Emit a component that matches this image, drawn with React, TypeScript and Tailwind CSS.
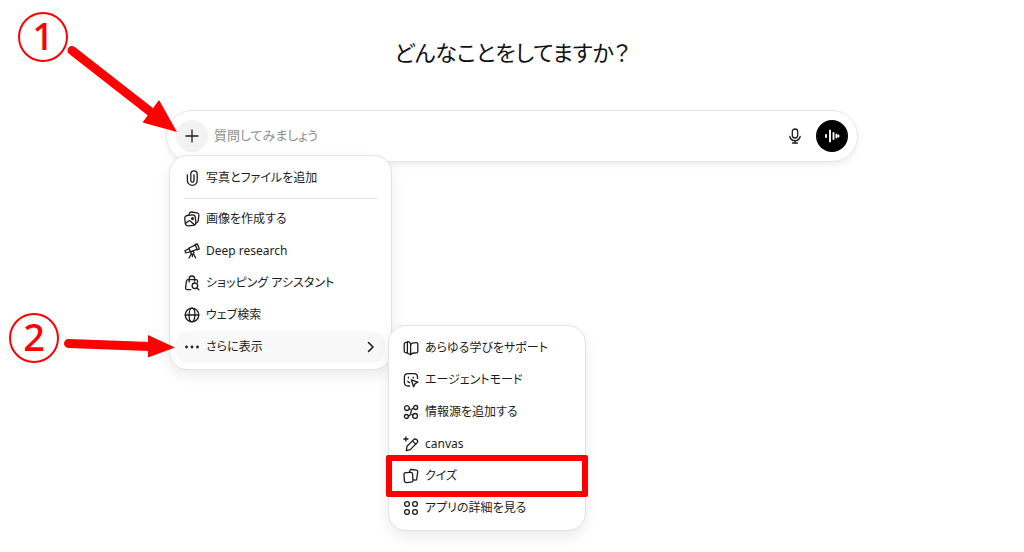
import React, { useState } from 'react';

interface IconProps {
  children: React.ReactNode;
}

interface MenuItem {
  label: string;
  icon: React.ReactNode;
  marked?: boolean;
  hasSubmenu?: boolean;
}

const Icon: React.FC<IconProps> = ({ children }) => (
  <svg
    viewBox="0 0 16 16"
    className="size-4 shrink-0"
    fill="none"
    stroke="currentColor"
    strokeWidth="1.3"
    strokeLinecap="round"
    strokeLinejoin="round"
    aria-hidden="true"
  >
    {children}
  </svg>
);

const ClipIcon = () => (
  <Icon>
    <path d="M3.4 4.8v5.6a4.9 4.9 0 0 0 9.8 0V4a3.2 3.2 0 0 0-6.4 0v6.6a1.6 1.6 0 0 0 3.2 0V4.8" />
  </Icon>
);

const ImagesIcon = () => (
  <Icon>
    <path d="M5 3.2 5.4 2.3Q6 .8 7.6 1l5.4.8q2 .3 1.9 2.1l-.7 5.700q-.2 1.800-1.900 2.300" />
    <rect x="1" y="4.200" width="10.600" height="10.400" rx="2.800" transform="rotate(-6 6.300 9.400)" />
    <path d="m1.800 12.200 2.800-2.300q.8-.6 1.600 0l4.300 3.900" />
    <circle cx="8.500" cy="7.600" r=".9" />
  </Icon>
);

const TelescopeIcon = () => (
  <Icon>
    <path d="m11.200 1.500 2.200-.5 1.900 4.800-2.100 1z" />
    <path d="M11.300 2.200 4.900 5l1.600 3.800 6.300-2.400" />
    <path d="M5 5.600.9 7.800l1 2.200 4.500-1.300" />
    <circle cx="8.400" cy="9.800" r="1.500" />
    <path d="m7.300 11-2.300 4M9.500 11l2.200 4M8.400 11.500v2" />
  </Icon>
);

const ShoppingIcon = () => (
  <Icon>
    <path d="M5.200 7V3.700a2.700 2.700 0 0 1 5.400 0v2.500" />
    <path d="m13.700 7-.1-.8q-.2-1.500-1.500-1.500H4Q2.700 4.700 2.500 6.200l-.9 6.200q-.2 2.300 1.800 2.300h3.400" />
    <circle cx="10.900" cy="10.800" r="2.800" />
    <path d="m13 13 1.900 1.800" />
  </Icon>
);

const GlobeIcon = () => (
  <Icon>
    <circle cx="8" cy="8" r="6.800" />
    <ellipse cx="8" cy="8" rx="2.900" ry="6.800" />
    <path d="M1.200 8h13.600" />
  </Icon>
);

const DotsIcon = () => (
  <Icon>
    <g fill="currentColor" stroke="none">
      <circle cx="2.500" cy="8" r="1.400" />
      <circle cx="8" cy="8" r="1.400" />
      <circle cx="13.500" cy="8" r="1.400" />
    </g>
  </Icon>
);

const BookIcon = () => (
  <Icon>
    <path d="M7.600 3.600v11.200L4.400 13V2.600q0-1.600 1.300-.8z" />
    <path d="M4.400 2.400H3q-1.800 0-1.800 1.800v6.600q0 1.700 1.500 1.900l1.700.3" />
    <path d="M7.600 4.600q1.200-1.500 3-1.700l2.600-.3q1.600-.1 1.600 1.400v7.400q0 1.300-1.400 1.400l-2.600.2q-1.800.2-3.200 1.600" />
  </Icon>
);

const AgentIcon = () => (
  <Icon>
    <path d="M6.600 14H5Q1.400 14 1.400 10.400V5.300Q1.400 1.700 5 1.700h6q3.500 0 3.500 3.500v1.400" />
    <path d="M5.400 5.200v.8M10.200 5.200v.8M4.800 9.400q.6.900 1.700 1.100" />
    <path d="m8.300 7.800 6.600 2.400-2.800 1.400-1.500 3.200z" />
  </Icon>
);

const SourcesIcon = () => (
  <Icon>
    <circle cx="3.900" cy="4.100" r="2.400" />
    <circle cx="12.600" cy="3.500" r="2" />
    <circle cx="3.400" cy="12.500" r="2" />
    <circle cx="12.100" cy="11.900" r="2.400" />
    <path d="M10.600 3.800Q8.700 4.300 8.300 6.800L7.700 9.400Q7.200 11.800 5.400 12.200M6.200 4.800l1 .6M9.800 11.200l-.9-.6" />
  </Icon>
);

const PencilIcon = () => (
  <Icon>
    <path d="m3.300 14.600.7-4.400 6.700-6.600q1.500-1.400 3.100.2t.2 3.100l-6.700 6.700zM9.500 4.900l3.300 3.300" />
    <path d="M2.900.9v4.200M.8 3H5" />
  </Icon>
);

const CardsIcon = () => (
  <Icon>
    <rect x="1.200" y="4.500" width="8.600" height="9.900" rx="1.800" transform="rotate(-4 5.500 9.500)" />
    <path d="M6.500 4 6.800 2.800q.4-1.500 1.900-1.300l4.700.7q1.500.3 1.300 1.800l-1 6.800q-.2 1.500-1.700 1.300l-1.800-.2" />
  </Icon>
);

const AppsIcon = () => (
  <Icon>
    <circle cx="4" cy="4" r="2.400" />
    <circle cx="12" cy="4" r="2.400" />
    <circle cx="4" cy="12" r="2.400" />
    <circle cx="12" cy="12" r="2.400" />
  </Icon>
);

const mainItems: MenuItem[] = [
  { label: '画像を作成する', icon: <ImagesIcon /> },
  { label: 'Deep research', icon: <TelescopeIcon /> },
  { label: 'ショッピング アシスタント', icon: <ShoppingIcon /> },
  { label: 'ウェブ検索', icon: <GlobeIcon /> },
  { label: 'さらに表示', icon: <DotsIcon />, hasSubmenu: true },
];

const moreItems: MenuItem[] = [
  { label: 'あらゆる学びをサポート', icon: <BookIcon /> },
  { label: 'エージェントモード', icon: <AgentIcon /> },
  { label: '情報源を追加する', icon: <SourcesIcon /> },
  { label: 'canvas', icon: <PencilIcon /> },
  { label: 'クイズ', icon: <CardsIcon />, marked: true },
  { label: 'アプリの詳細を見る', icon: <AppsIcon /> },
];

const MenuRow: React.FC<{ item: MenuItem }> = ({ item }) => (
  <button
    type="button"
    role="menuitem"
    className={`relative flex h-8 w-full items-center gap-1.5 rounded-xl px-2 text-left whitespace-nowrap ${
      item.hasSubmenu ? 'bg-[#f8f8f8]' : 'hover:bg-[#f8f8f8]'
    }`}
  >
    {item.icon}
    <span className="flex-1">{item.label}</span>
    {item.hasSubmenu && (
      <Icon>
        <path strokeWidth="1.600" d="m7.500 3.500 4.500 4.500-4.500 4.500" />
      </Icon>
    )}
    {item.marked && (
      <span className="absolute -inset-x-[9px] -inset-y-[5px] rounded-xs border-6 border-[#ff0000]" />
    )}
  </button>
);

const panel =
  'absolute rounded-[18px] border border-[#e2e2e2] bg-white p-1.5 text-xs shadow-[0_6px_14px_rgba(0,0,0,0.08)]';

const Annotations = () => (
  <div className="pointer-events-none absolute -top-[110px] -left-[166px] z-20 text-[#ff0000]">
    <svg width="180" height="370" viewBox="0 0 180 370" fill="currentColor" aria-hidden="true">
      <g stroke="currentColor" strokeWidth="9" strokeLinecap="round">
        <path d="M72 50.500 152 113" />
        <path d="M68.500 343.500 150 346.500" />
      </g>
      <path d="M177 132 159 100 142.500 122.500z" />
      <path d="M175 347.500 148 335v22.500z" />
    </svg>
    <span className="absolute top-3 left-[18px] flex size-[50px] items-center justify-center rounded-full border-2 pb-1 text-[38px] font-medium">
      1
    </span>
    <span className="absolute top-[313px] left-[9px] flex size-[50px] items-center justify-center rounded-full border-2 pb-1 text-[38px] font-medium">
      2
    </span>
  </div>
);

export default function App() {
  const [question, setQuestion] = useState('');

  return (
    <main className="min-h-screen bg-white pt-8 font-['Noto_Sans','Noto_Sans_CJK_JP',sans-serif] text-[#1c1c1c] [font-feature-settings:'palt']">
      <h1 className="text-center text-[22px] leading-10 text-[#111]">どんなことをしてますか？</h1>

      <div className="relative mx-auto mt-[38px] w-full max-w-[692px]">
        <form
          onSubmit={e => e.preventDefault()}
          className="flex h-[52px] items-center rounded-full border border-[#e6e6e6] px-[9px] shadow-[0_3px_6px_rgba(0,0,0,0.07)]"
        >
          <button
            type="button"
            aria-label="追加"
            className="flex size-8 items-center justify-center rounded-full bg-[#f2f2f2]"
          >
            <Icon>
              <path d="M8 2v12M2 8h12" />
            </Icon>
          </button>
          <input
            type="text"
            value={question}
            onChange={e => setQuestion(e.target.value)}
            aria-label="質問"
            placeholder="質問してみましょう"
            className="min-w-0 flex-1 px-1.5 text-[13px] outline-none placeholder:text-[#8f8f8f]"
          />
          <button type="button" aria-label="音声入力" className="mr-[13px] p-0">
            <Icon>
              <rect x="5.300" y="1" width="5.400" height="9" rx="2.700" />
              <path d="M2.800 8.500q1 4.200 5.200 4.200t5.200-4.200M8 12.700V15M5.500 15h5" />
            </Icon>
          </button>
          <button
            type="button"
            aria-label="音声モード"
            className="flex size-8 items-center justify-center rounded-full bg-black text-white"
          >
            <Icon>
              <path strokeWidth="1.900" d="M2 7v2M6 2.500v11M9.500 5v6M12.500 6.500v3M14.500 7.500v1" />
            </Icon>
          </button>
        </form>

        <div role="menu" className={`${panel} top-[45px] left-[3px] z-10 w-[223px]`}>
          <MenuRow item={{ label: '写真とファイルを追加', icon: <ClipIcon /> }} />
          <hr className="mx-2 my-1 border-[#e0e0e0]" />
          {mainItems.map(item => (
            <MenuRow key={item.label} item={item} />
          ))}
        </div>

        <div role="menu" className={`${panel} top-[215px] left-[222px] z-10 w-[198px]`}>
          {moreItems.map(item => (
            <MenuRow key={item.label} item={item} />
          ))}
        </div>

        <Annotations />
      </div>
    </main>
  );
}
